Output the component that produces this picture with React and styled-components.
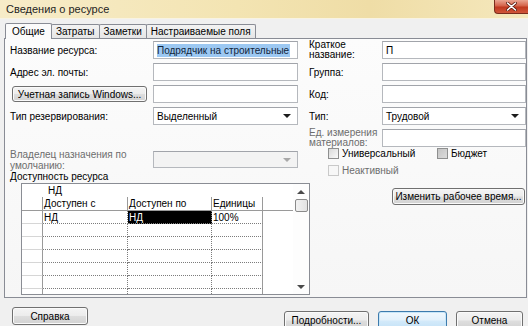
import React from 'react'
import styled, { createGlobalStyle, css } from 'styled-components'

const GlobalStyle = createGlobalStyle`
  html, body {
    margin: 0;
    padding: 0;
  }
  body {
    background: #f0f0f0;
    font-family: 'Liberation Sans', Arial, sans-serif;
    font-size: 10px;
    color: #000;
  }
`

const Window = styled.div`
  width: 528px;
  height: 326px;
  overflow: hidden;
  display: flex;
  flex-direction: column;
  background: #f0f0f0;
`
const TitleBar = styled.div`
  height: 18px;
  flex-shrink: 0;
  display: flex;
  justify-content: space-between;
  align-items: flex-start;
  background: linear-gradient(to right, #f7ecc8 0%, #f3e4b2 45%, #efdda6 70%, #f5e8bd 100%);
  border-bottom: 1px solid #f8f3e2;
`
const Title = styled.span`
  font-size: 11px;
  line-height: 19px;
  padding-left: 6px;
  color: #1e1e1e;
`
const CloseButton = styled.div`
  width: 34px;
  height: 14px;
  box-sizing: border-box;
  border: 1px solid #7a2d1c;
  border-top: none;
  border-right: none;
  border-radius: 0 0 0 4px;
  background: linear-gradient(#eaa591 0%, #d4634a 45%, #c0391f 55%, #d0563a 100%);
  display: flex;
  align-items: center;
  justify-content: center;
`
const Body = styled.div`
  flex: 1;
  display: flex;
  flex-direction: column;
  padding: 4px 1px 0 4px;
`
const TabStrip = styled.div`
  display: flex;
  align-items: flex-end;
  height: 15px;
  padding-left: 1px;
`
const Tab = styled.div`
  box-sizing: border-box;
  height: ${({ active }) => (active ? 16 : 14)}px;
  padding: 0 ${({ active }) => (active ? 6 : 4)}px;
  margin-right: -1px;
  margin-bottom: ${({ active }) => (active ? -1 : 0)}px;
  border: 1px solid #898c95;
  border-bottom: none;
  border-radius: 2px 2px 0 0;
  background: ${({ active }) => (active ? '#fbfbfb' : 'linear-gradient(#f3f3f3, #e6e6e6)')};
  line-height: ${({ active }) => (active ? 15 : 13)}px;
  white-space: nowrap;
  position: relative;
  z-index: ${({ active }) => (active ? 1 : 0)};
`
const Panel = styled.div`
  box-sizing: border-box;
  height: 260px;
  border: 1px solid #898c95;
  background: linear-gradient(#fcfcfc, #f6f6f6);
  padding: 2px 0 0 5px;
  display: flex;
  flex-direction: column;
`
const TopForm = styled.div`
  display: flex;
  gap: 11px;
`
const FieldGrid = styled.div`
  display: grid;
  grid-template-columns: ${({ cols }) => cols};
  grid-auto-rows: 18px;
  row-gap: 4px;
`
const Label = styled.div`
  align-self: center;
  line-height: ${({ lines }) => (lines ? 10 : 12)}px;
  margin-top: ${({ lines }) => (lines ? -1 : 2)}px;
  color: ${({ muted }) => (muted ? '#6d6d6d' : '#000')};
  white-space: nowrap;
`
const Field = styled.div`
  box-sizing: border-box;
  height: 18px;
  border: 1px solid #b5b8bd;
  border-top-color: #a1a4aa;
  background: ${({ disabled }) => (disabled ? '#f3f3f3' : '#fff')};
  display: flex;
  align-items: center;
  padding: 0 3px;
  overflow: hidden;
  white-space: nowrap;
`
const Selected = styled.span`
  background: #9cc8f2;
  color: #10243a;
  line-height: 13px;
  padding-right: 1px;
`
const Arrow = styled.span`
  margin-left: auto;
  margin-right: 3px;
  width: 0;
  height: 0;
  border-left: 4px solid transparent;
  border-right: 4px solid transparent;
  border-top: 4px solid ${({ disabled }) => (disabled ? '#a8a8a8' : '#1c1c1c')};
  ${({ up }) =>
    up &&
    css`
      border-top: none;
      border-bottom: 4px solid #4a4a4a;
      margin: 0;
    `}
`
const Button = styled.div`
  box-sizing: border-box;
  width: ${({ w }) => w}px;
  height: ${({ h }) => h || 18}px;
  border: 1px solid #707070;
  border-radius: 3px;
  background: linear-gradient(#f4f4f4 0%, #ececec 48%, #dedede 52%, #d2d2d2 100%);
  box-shadow: inset 0 0 0 1px #fafafa;
  display: flex;
  align-items: center;
  justify-content: center;
  white-space: nowrap;
  flex-shrink: 0;
  ${({ primary }) =>
    primary &&
    css`
      border-color: #3d7bad;
      background: linear-gradient(#f1f8fd 0%, #e3f1fb 48%, #d3eafa 52%, #c3e1f6 100%);
      box-shadow: inset 0 0 0 1px #c8e6f8;
    `}
`
const WindowsButton = styled(Button)`
  align-self: center;
  margin-left: 2px;
`
const LowerArea = styled.div`
  display: flex;
  flex: 1;
  min-height: 0;
`
const LowerLeft = styled.div`
  width: 299px;
  display: flex;
  flex-direction: column;
`
const OwnerRow = styled.div`
  display: flex;
  margin-top: 2px;
  height: 22px;
`
const OwnerLabel = styled.div`
  width: 143px;
  line-height: 11px;
  color: #6d6d6d;
  white-space: nowrap;
`
const OwnerSelect = styled(Field)`
  width: 145px;
  height: 17px;
  margin-top: 2px;
`
const SectionLabel = styled.div`
  line-height: 11px;
  margin-bottom: 1px;
`
const GridBox = styled.div`
  margin-left: 11px;
  width: 289px;
  height: 112px;
  box-sizing: border-box;
  border: 1px solid #8a8d94;
  background: #fff;
  display: flex;
  overflow: hidden;
`
const GridMain = styled.div`
  flex: 1;
  display: flex;
  flex-direction: column;
  overflow: hidden;
`
const EntryRow = styled.div`
  height: 13px;
  flex-shrink: 0;
  line-height: 14px;
  padding-left: 26px;
`
const HeaderRow = styled.div`
  display: flex;
  height: 14px;
  flex-shrink: 0;
  box-sizing: border-box;
  border-bottom: 1px solid #9a9a9a;
`
const HeadCell = styled.div`
  box-sizing: border-box;
  width: ${({ w }) => w}px;
  flex-shrink: 0;
  border-right: 1px solid #9a9a9a;
  padding-left: 1px;
  line-height: 14px;
  white-space: nowrap;
  overflow: hidden;
`
const DataRow = styled.div`
  display: flex;
  height: 13px;
  flex-shrink: 0;
`
const RowHead = styled.div`
  box-sizing: border-box;
  width: 21px;
  flex-shrink: 0;
  border-right: 1px solid #9a9a9a;
  border-bottom: 1px solid #d6d6d6;
`
const Cell = styled.div`
  box-sizing: border-box;
  width: ${({ w }) => w}px;
  flex-shrink: 0;
  border-bottom: 1px dotted #7c7c7c;
  border-right: 1px ${({ last }) => (last ? 'solid #9a9a9a' : 'dotted #7c7c7c')};
  padding-left: 1px;
  line-height: 13px;
  white-space: nowrap;
  background: ${({ active }) => (active ? '#000' : 'transparent')};
  color: ${({ active }) => (active ? '#fff' : '#000')};
`
const ScrollBar = styled.div`
  width: 16px;
  flex-shrink: 0;
  display: flex;
  flex-direction: column;
  align-items: center;
  background: #fdfdfd;
`
const ScrollArrow = styled.div`
  height: 15px;
  flex-shrink: 0;
  display: flex;
  align-items: center;
  justify-content: center;
`
const DownArrow = styled(Arrow)`
  margin: 0;
  border-top-color: #4a4a4a;
`
const Thumb = styled.div`
  width: 13px;
  height: 13px;
  box-sizing: border-box;
  border: 1px solid #8a8a8a;
  border-radius: 2px;
  background: linear-gradient(to right, #f2f2f2, #e2e2e2);
`
const Track = styled.div`
  flex: 1;
`
const LowerRight = styled.div`
  flex: 1;
  display: flex;
  flex-direction: column;
`
const CheckRow = styled.div`
  display: grid;
  grid-template-columns: 109px auto;
  margin-top: ${({ top }) => top}px;
  padding-left: 19px;
`
const CheckItem = styled.div`
  display: flex;
  align-items: center;
  gap: 3px;
  height: 11px;
  color: ${({ disabled }) => (disabled ? '#6d6d6d' : '#000')};
  white-space: nowrap;
`
const Box = styled.span`
  width: 11px;
  height: 11px;
  box-sizing: border-box;
  flex-shrink: 0;
  border: 1px solid ${({ disabled }) => (disabled ? '#c9c9c9' : '#8e8f8f')};
  background: ${({ shade, disabled }) =>
    disabled
      ? '#f7f7f7'
      : shade
        ? 'linear-gradient(135deg, #c4c4c4, #dcdcdc)'
        : 'linear-gradient(135deg, #d9d9d9, #fafafa)'};
`
const ChangeButton = styled(Button)`
  margin-top: 12px;
  margin-left: 83px;
`
const Footer = styled.div`
  display: flex;
  justify-content: space-between;
  padding: 0 4px 0 8px;
`
const HelpButton = styled(Button)`
  margin-top: 9px;
`
const ButtonGroup = styled.div`
  display: flex;
  gap: 9px;
  margin-top: 13px;
`

const CloseIcon = () => (
  <svg width="11" height="9" viewBox="0 0 11 9">
    <path d="M1.5 1 L9.5 8 M9.5 1 L1.5 8" stroke="#5a1a0e" strokeWidth="3" strokeLinecap="round" />
    <path d="M1.5 1 L9.5 8 M9.5 1 L1.5 8" stroke="#fff" strokeWidth="1.6" strokeLinecap="round" />
  </svg>
)

const columns = [
  { title: 'Доступен с', w: 85 },
  { title: 'Доступен по', w: 84 },
  { title: 'Единицы', w: 51 },
]

const rows = [['НД', 'НД', '100%'], [], [], [], [], [], []]

export default function App() {
  return (
    <>
      <GlobalStyle />
      <Window>
        <TitleBar>
          <Title>Сведения о ресурсе</Title>
          <CloseButton>
            <CloseIcon />
          </CloseButton>
        </TitleBar>
        <Body>
          <TabStrip>
            <Tab active>Общие</Tab>
            <Tab>Затраты</Tab>
            <Tab>Заметки</Tab>
            <Tab>Настраиваемые поля</Tab>
          </TabStrip>
          <Panel>
            <TopForm>
              <FieldGrid cols="143px 145px">
                <Label>Название ресурса:</Label>
                <Field>
                  <Selected>Подрядчик на строительные</Selected>
                </Field>
                <Label>Адрес эл. почты:</Label>
                <Field />
                <WindowsButton w={135} h={16}>
                  Учетная запись Windows...
                </WindowsButton>
                <Field />
                <Label>Тип резервирования:</Label>
                <Field>
                  Выделенный
                  <Arrow />
                </Field>
              </FieldGrid>
              <FieldGrid cols="73px 144px">
                <Label lines>
                  Краткое
                  <br />
                  название:
                </Label>
                <Field>П</Field>
                <Label>Группа:</Label>
                <Field />
                <Label>Код:</Label>
                <Field />
                <Label>Тип:</Label>
                <Field>
                  Трудовой
                  <Arrow />
                </Field>
                <Label lines muted>
                  Ед. измерения
                  <br />
                  материалов:
                </Label>
                <Field />
              </FieldGrid>
            </TopForm>
            <LowerArea>
              <LowerLeft>
                <OwnerRow>
                  <OwnerLabel>
                    Владелец назначения по
                    <br />
                    умолчанию:
                  </OwnerLabel>
                  <OwnerSelect disabled>
                    <Arrow disabled />
                  </OwnerSelect>
                </OwnerRow>
                <SectionLabel>Доступность ресурса</SectionLabel>
                <GridBox>
                  <GridMain>
                    <EntryRow>НД</EntryRow>
                    <HeaderRow>
                      <HeadCell w={21} />
                      {columns.map((c) => (
                        <HeadCell key={c.title} w={c.w}>
                          {c.title}
                        </HeadCell>
                      ))}
                    </HeaderRow>
                    {rows.map((r, i) => (
                      <DataRow key={i}>
                        <RowHead />
                        {columns.map((c, j) => (
                          <Cell
                            key={c.title}
                            w={c.w}
                            last={j === columns.length - 1}
                            active={i === 0 && j === 1}
                          >
                            {r[j] || ''}
                          </Cell>
                        ))}
                      </DataRow>
                    ))}
                  </GridMain>
                  <ScrollBar>
                    <ScrollArrow>
                      <Arrow up />
                    </ScrollArrow>
                    <Thumb />
                    <Track />
                    <ScrollArrow>
                      <DownArrow />
                    </ScrollArrow>
                  </ScrollBar>
                </GridBox>
              </LowerLeft>
              <LowerRight>
                <CheckRow top={1}>
                  <CheckItem>
                    <Box />
                    Универсальный
                  </CheckItem>
                  <CheckItem>
                    <Box shade />
                    Бюджет
                  </CheckItem>
                </CheckRow>
                <CheckRow top={6}>
                  <CheckItem disabled>
                    <Box disabled />
                    Неактивный
                  </CheckItem>
                </CheckRow>
                <ChangeButton w={133} h={17}>
                  Изменить рабочее время...
                </ChangeButton>
              </LowerRight>
            </LowerArea>
          </Panel>
          <Footer>
            <HelpButton w={76} h={18}>
              Справка
            </HelpButton>
            <ButtonGroup>
              <Button w={85} h={19}>
                Подробности...
              </Button>
              <Button w={69} h={19} primary>
                ОК
              </Button>
              <Button w={67} h={19}>
                Отмена
              </Button>
            </ButtonGroup>
          </Footer>
        </Body>
      </Window>
    </>
  )
}
